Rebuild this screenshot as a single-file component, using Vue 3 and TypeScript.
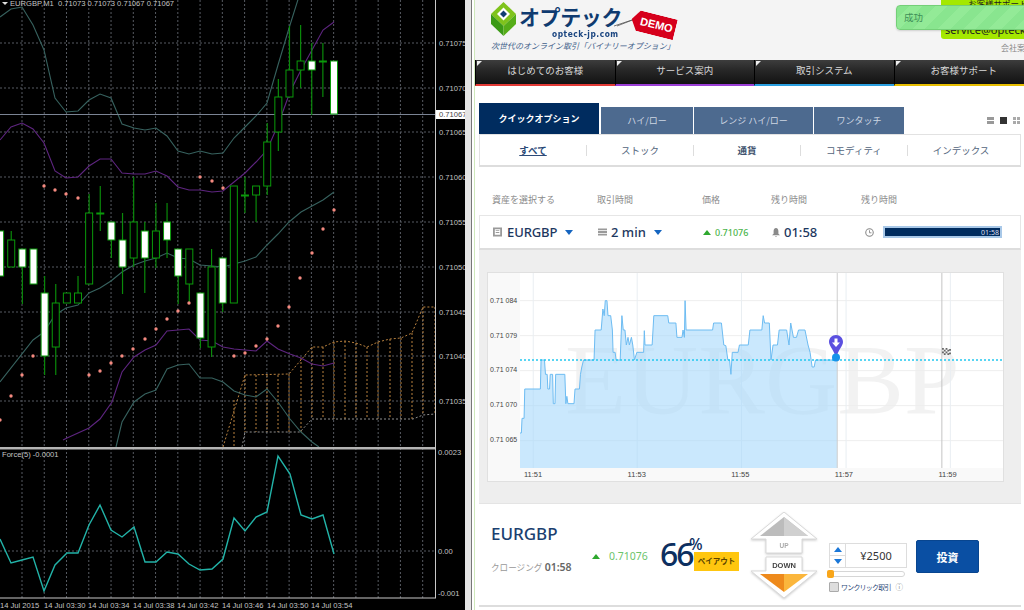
<script setup lang="ts">
type Candle = { top: number; bottom: number; hi: number; lo: number; filled: boolean }
type Pt = [number, number]

const toPoints = (pts: Pt[]) => pts.map(p => p.join(',')).join(' ')

// candles from newest (x=334) to oldest, step is one bar on the M1 chart
const rawCandles: [number, number, number, number, number][] = [
  [61, 114, 61, 114, 1], [61, 62, 43, 97, 0], [61, 70, 43, 115, 1], [61, 70, 25, 88, 0],
  [70, 97, 26, 97, 0], [97, 132, 79, 151, 0], [142, 186, 123, 195, 0], [186, 195, 186, 222, 0],
  [195, 196, 177, 213, 0], [186, 303, 186, 303, 0], [258, 303, 258, 312, 1], [267, 347, 249, 357, 0],
  [293, 338, 293, 348, 1], [249, 284, 249, 304, 0], [249, 276, 249, 304, 1], [222, 240, 203, 258, 1],
  [231, 258, 203, 268, 0], [231, 258, 222, 293, 1], [222, 258, 177, 267, 0], [240, 267, 213, 294, 1],
  [222, 240, 222, 258, 1], [213, 214, 186, 231, 0], [213, 284, 194, 284, 0], [293, 303, 276, 303, 0],
  [293, 303, 293, 303, 0], [303, 347, 284, 375, 0], [293, 356, 276, 375, 1], [249, 284, 249, 284, 1],
  [249, 267, 249, 304, 1], [240, 267, 231, 267, 0], [231, 276, 231, 276, 1]
]
const candles: (Candle & { x: number })[] = rawCandles.map((c, i) => ({
  x: 334 - i * 11.13,
  top: c[0],
  bottom: c[1],
  hi: c[2],
  lo: c[3],
  filled: c[4] === 1
}))

const upperBand = toPoints([[0, 17], [11, 9], [22, 7], [33, 25], [44, 50], [55, 98], [66, 112], [78, 111], [89, 100], [100, 94], [111, 98], [122, 124], [134, 128], [145, 130], [156, 128], [167, 136], [178, 151], [189, 154], [200, 151], [212, 154], [223, 153], [234, 138], [245, 127], [256, 116], [267, 103], [278, 65], [290, 25], [301, -10]])
const upperMid = toPoints([[0, 140], [11, 127], [22, 123], [33, 129], [44, 143], [55, 171], [66, 178], [78, 177], [89, 166], [100, 159], [111, 159], [122, 173], [134, 174], [145, 174], [156, 171], [167, 176], [178, 187], [189, 190], [200, 190], [212, 192], [223, 191], [234, 182], [245, 173], [256, 162], [267, 150], [278, 125], [290, 92], [301, 70], [312, 50], [323, 30], [334, 22]])
const lowerBand = toPoints([[0, 382], [33, 340], [44, 332], [55, 315], [66, 308], [78, 305], [89, 293], [100, 288], [111, 281], [122, 272], [134, 265], [145, 261], [156, 258], [167, 253], [178, 258], [189, 259], [200, 265], [212, 266], [223, 267], [234, 264], [245, 261], [256, 257], [267, 245], [278, 234], [289, 222], [301, 212], [312, 206], [323, 200], [334, 192]])
const lowerMid = toPoints([[63, 440], [67, 438], [89, 428], [100, 419], [112, 402], [122, 372], [134, 357], [145, 350], [156, 345], [167, 331], [178, 330], [189, 329], [200, 340], [212, 341], [223, 347], [234, 349], [245, 350], [256, 351], [267, 341], [278, 349], [290, 354], [301, 358], [312, 364], [323, 366], [334, 363]])
const lowestBand = toPoints([[116, 447], [122, 422], [134, 402], [145, 394], [156, 390], [167, 369], [178, 365], [189, 364], [200, 378], [212, 378], [223, 382], [234, 391], [245, 395], [256, 397], [267, 389], [278, 402], [290, 419], [301, 432], [312, 442], [319, 447]])
const cloudTop = toPoints([[223, 447], [245, 375], [289, 374], [312, 347], [323, 347], [334, 342], [345, 341], [356, 343], [367, 347], [378, 342], [390, 339], [401, 338], [412, 333], [423, 307], [435, 307]])
const cloudBottom = toPoints([[242, 447], [245, 432], [300, 432], [312, 419], [413, 419], [423, 415], [435, 414]])
const cloudBars: [number, number, number][] = [
  [234, 400, 447], [245, 375, 432], [256, 375, 432], [267, 375, 432], [278, 375, 432], [289, 374, 432],
  [301, 358, 432], [312, 347, 419], [323, 347, 419], [334, 342, 419], [345, 341, 419], [356, 343, 419],
  [367, 347, 419], [378, 342, 419], [390, 339, 419], [401, 338, 419], [412, 333, 419], [423, 307, 415], [435, 307, 414]
]
const sarDots: Pt[] = [[44, 186], [55, 190], [66, 194], [78, 198], [200, 177], [212, 181], [223, 188], [334, 210], [323, 229], [312, 253], [300, 278], [289, 307], [278, 326], [267, 339], [256, 346], [245, 353], [234, 356], [189, 303], [178, 311], [167, 319], [156, 329], [145, 339], [133, 349], [122, 356], [111, 363], [100, 371], [89, 375], [33, 356], [22, 375], [11, 396], [0, 420]]
const forceLine = toPoints([[0, 539], [11, 563], [22, 560], [33, 557], [44, 591], [55, 565], [67, 553], [78, 553], [89, 525], [100, 505], [111, 530], [122, 537], [134, 527], [145, 562], [156, 562], [167, 552], [178, 554], [189, 564], [200, 570], [212, 569], [223, 559], [234, 518], [245, 531], [256, 517], [267, 512], [278, 456], [290, 474], [301, 515], [312, 519], [323, 515], [334, 554]])

const gridX = Array.from({ length: 19 }, (_, i) => 22 + i * 22.26)
const priceLevels: [number, string][] = [
  [43, '0.71075'], [88, '0.71070'], [132, '0.71065'], [177, '0.71060'], [222, '0.71055'],
  [267, '0.71050'], [312, '0.71045'], [356, '0.71040'], [401, '0.71035']
]
const timeLabels: [number, string][] = [
  [0, '14 Jul 2015'], [44, '14 Jul 03:30'], [88, '14 Jul 03:34'], [133, '14 Jul 03:38'],
  [177, '14 Jul 03:42'], [222, '14 Jul 03:46'], [267, '14 Jul 03:50'], [311, '14 Jul 03:54']
]

const navItems = [
  { label: 'はじめてのお客様', color: '#e23a36' },
  { label: 'サービス案内', color: '#9b3fd6' },
  { label: '取引システム', color: '#2a9fe0' },
  { label: 'お客様サポート', color: '#e6bd00' }
]
const tabs = ['クイックオプション', 'ハイ/ロー', 'レンジ ハイ/ロー', 'ワンタッチ']
const assets = ['すべて', 'ストック', '通貨', 'コモディティ', 'インデックス']

// blue line of the option chart
const tick: Pt[] = [[118, 502], [122, 502], [124, 458], [130, 458], [132, 370], [178, 370], [180, 283], [190, 283], [193, 326], [198, 326], [200, 370], [205, 370], [207, 326], [214, 326], [216, 414], [221, 414], [223, 326], [250, 326], [253, 414], [256, 392], [259, 414], [277, 414], [280, 370], [293, 370], [296, 326], [300, 304], [305, 283], [336, 283], [339, 193], [357, 193], [362, 130], [366, 150], [369, 105], [374, 105], [377, 150], [385, 150], [390, 193], [392, 260], [398, 260], [401, 283], [413, 283], [418, 150], [422, 193], [427, 193], [431, 238], [436, 215], [440, 238], [446, 215], [450, 238], [455, 283], [462, 260], [482, 260], [484, 195], [486, 238], [507, 238], [512, 150], [553, 150], [556, 172], [577, 172], [580, 215], [595, 215], [598, 193], [602, 215], [604, 105], [607, 193], [685, 193], [688, 172], [711, 172], [718, 238], [724, 240], [730, 283], [735, 283], [739, 326], [743, 260], [760, 260], [764, 238], [790, 238], [795, 193], [830, 193], [834, 150], [838, 172], [852, 172], [857, 283], [863, 238], [876, 238], [881, 193], [903, 193], [910, 238], [915, 172], [923, 215], [932, 215], [938, 193], [957, 193], [966, 238], [972, 260], [978, 304], [984, 304], [988, 283], [1052, 283]]
const tickLine = toPoints(tick)
const tickArea = toPoints([...tick, [1052, 607], [118, 607]])
const chartRows = [105, 210, 315, 420, 525]
const chartCols = [157, 463, 770, 1078, 1385]
const yLabels = ['0.71 084', '0.71 079', '0.71 074', '0.71 070', '0.71 065']
const xLabels = ['11:51', '11:53', '11:55', '11:57', '11:59']
</script>

<template>
  <div class="screen">
    <div class="terminal">
      <svg class="mt4" viewBox="0 0 465 610" width="465" height="610">
        <g stroke="#575b62" stroke-width="1" stroke-dasharray="2 2">
          <line v-for="x in gridX" :key="x" :x1="x" y1="0" :x2="x" y2="598" />
          <line v-for="p in priceLevels" :key="p[1]" x1="0" :y1="p[0]" x2="435" :y2="p[0]" />
          <line x1="0" y1="551" x2="435" y2="551" />
        </g>
        <g fill="none" stroke="#b8813f" stroke-dasharray="2 2">
          <polyline :points="cloudTop" />
          <line v-for="b in cloudBars" :key="b[0]" :x1="b[0]" :y1="b[1]" :x2="b[0]" :y2="b[2]" />
        </g>
        <polyline :points="cloudBottom" fill="none" stroke="#8f8f8f" stroke-dasharray="2 2" />
        <g fill="none" stroke="#37625f" stroke-width="1.1">
          <polyline :points="upperBand" />
          <polyline :points="lowerBand" />
          <polyline :points="lowestBand" />
        </g>
        <g fill="none" stroke="#5e2580" stroke-width="1.1">
          <polyline :points="upperMid" />
          <polyline :points="lowerMid" />
        </g>
        <line x1="0" y1="114.5" x2="435" y2="114.5" stroke="#7b8494" />
        <g v-for="c in candles" :key="c.x">
          <line :x1="c.x" :y1="c.hi" :x2="c.x" :y2="c.lo" stroke="#0a8a0a" stroke-width="1.2" />
          <rect :x="c.x - 3.5" :y="c.top" width="7" :height="c.bottom - c.top"
            :fill="c.filled ? '#fff' : '#000'" stroke="#0a9a0a" stroke-width="1" />
        </g>
        <circle v-for="d in sarDots" :key="d.join('-')" :cx="d[0]" :cy="d[1]" r="1.7" fill="#f58a80" />

        <rect x="0" y="447" width="436" height="2.5" fill="#b4b4b4" />
        <line x1="435.5" y1="0" x2="435.5" y2="598" stroke="#c8c8c8" />
        <line x1="0" y1="598" x2="436" y2="598" stroke="#c8c8c8" />
        <polyline :points="forceLine" fill="none" stroke="#22b3a8" stroke-width="1.4" />

        <rect x="436" y="110" width="29" height="9" fill="#fff" />
        <g class="mt4-text">
          <text x="10" y="6">EURGBP,M1&#160; 0.71073 0.71073 0.71067 0.71067</text>
          <text x="2" y="457">Force(5) -0.0001</text>
          <text v-for="p in priceLevels" :key="p[1]" x="439" :y="p[0] + 3">{{ p[1] }}</text>
          <text x="438" y="455">0.0023</text>
          <text x="438" y="554">0.00</text>
          <text x="438" y="596">-0.001</text>
          <text v-for="t in timeLabels" :key="t[1]" :x="t[0]" y="608">{{ t[1] }}</text>
        </g>
        <text x="439" y="117" class="mt4-last">0.71067</text>
        <polygon points="2,2 8,2 5,5" fill="#ddd" />
      </svg>
    </div>
    <div class="divider"></div>

    <div class="site">
      <header class="head">
        <div class="brand">
          <div class="brand-top">
            <svg class="brand-mark" viewBox="0 0 25 34" width="25" height="34">
              <polygon points="12.5,0 25,12 12.5,24 0,12" fill="#7fc31c" />
              <polygon points="0,12 12.5,24 12.5,34 0,22" fill="#3b9a16" />
              <polygon points="25,12 12.5,24 12.5,34 25,22" fill="#56ad18" />
              <polygon points="12.5,5.5 19,12 12.5,18.5 6,12" fill="#fff" />
              <polygon points="12.5,8.5 16,12 12.5,15.5 9,12" fill="#103d72" />
            </svg>
            <div class="brand-name">
              <span class="brand-jp">オプテック</span>
              <span class="brand-url">opteck-jp.com</span>
            </div>
          </div>
          <div class="brand-tag">次世代のオンライン取引「バイナリーオプション」</div>
          <svg class="thread" viewBox="0 0 22 10" width="22" height="10">
            <polyline points="0,9 21,2 3,9" fill="none" stroke="#555" stroke-width="0.8" />
          </svg>
          <div class="demo">DEMO</div>
        </div>
        <div class="contact">
          <div class="contact-box">
            <span>お客様サポート</span>
            <span class="contact-mail">service@opteck-jp.com</span>
          </div>
          <div class="contact-link">会社案内</div>
        </div>
        <div class="toast">成功</div>
      </header>

      <nav class="nav">
        <a v-for="n in navItems" :key="n.label" class="nav-item" :style="{ borderBottomColor: n.color }">{{ n.label }}</a>
      </nav>

      <main class="body">
        <div class="tab-row">
          <div v-for="(t, i) in tabs" :key="t" class="tab" :class="['tab-' + i, { active: i === 0 }]">{{ t }}</div>
          <div class="views">
            <i class="v-rows"></i>
            <i class="v-one"></i>
            <i class="v-grid"></i>
          </div>
        </div>
        <div class="assets">
          <span v-for="(a, i) in assets" :key="a" class="asset" :class="{ current: i === 0, strong: i === 2 }">{{ a }}</span>
        </div>

        <div class="col-labels">
          <span class="c1">資産を選択する</span>
          <span class="c2">取引時間</span>
          <span class="c3">価格</span>
          <span class="c4">残り時間</span>
          <span class="c5">残り時間</span>
        </div>

        <div class="select-row">
          <span class="c1 sel">
            <svg viewBox="0 0 10 10" width="9" height="10"><path d="M0 0h10v10H0z M2 2v6h6V2z M3 3h4v1H3z M3 5h4v1H3z" fill="#9a9a9a" fill-rule="evenodd" /></svg>
            <b class="sel-pair">EURGBP</b><i class="caret"></i>
          </span>
          <span class="c2 sel">
            <svg viewBox="0 0 10 8" width="9" height="8"><path d="M0 0h10v2H0z M0 3h10v2H0z M0 6h10v2H0z" fill="#9a9a9a" /></svg>
            <b>2 min</b><i class="caret"></i>
          </span>
          <span class="c3 sel">
            <i class="up-green"></i><em class="live">0.71076</em>
          </span>
          <span class="c4 sel">
            <svg viewBox="0 0 10 11" width="8" height="9"><path d="M5 0c-2 0-3 2-3 4v3L0 9h10L8 7V4c0-2-1-4-3-4z M3.8 10h2.4L5 11z" fill="#8a8a8a" /></svg>
            <b>01:58</b>
          </span>
          <span class="c5 sel">
            <svg class="clock" viewBox="0 0 12 12" width="9" height="9"><circle cx="6" cy="6" r="5" fill="none" stroke="#888" stroke-width="1.4" /><path d="M6 3v3.4h2.6" fill="none" stroke="#888" stroke-width="1.2" /></svg>
            <span class="timer"><span>01:58</span></span>
          </span>
        </div>

        <section class="stage">
          <div class="chart">
            <div class="chart-main">
              <div class="y-axis">
                <span v-for="l in yLabels" :key="l">{{ l }}</span>
              </div>
              <div class="plot">
                <span class="watermark">EURGBP</span>
                <svg class="plot-svg" viewBox="118 22 1422 585" preserveAspectRatio="none">
                  <line v-for="r in chartRows" :key="r" x1="118" :y1="r" x2="1540" :y2="r" stroke="#eeeeee" vector-effect="non-scaling-stroke" />
                  <line v-for="c in chartCols" :key="c" :x1="c" y1="22" :x2="c" y2="607" stroke="#e9eef2" vector-effect="non-scaling-stroke" />
                  <polygon :points="tickArea" fill="#a6d8fb" fill-opacity="0.6" />
                  <polyline :points="tickLine" fill="none" stroke="#6dbcf2" stroke-width="1" vector-effect="non-scaling-stroke" />
                  <line x1="1052" y1="22" x2="1052" y2="607" stroke="#cfcfcf" vector-effect="non-scaling-stroke" />
                  <line x1="1360" y1="22" x2="1360" y2="607" stroke="#c4c4c4" vector-effect="non-scaling-stroke" />
                  <line x1="118" y1="283" x2="1540" y2="283" stroke="#22c8f0" stroke-width="1.6" stroke-dasharray="2 2" vector-effect="non-scaling-stroke" />
                </svg>
                <svg class="pin" viewBox="0 0 14 27" width="14" height="27">
                  <path d="M7 0C3 0 0 3 0 7c0 4 5 8 7 16 2-8 7-12 7-16 0-4-3-7-7-7z" fill="#5b50e0" />
                  <path d="M5.5 3.5h3v4H11L7 12 3 7.5h2.5z" fill="#fff" />
                  <circle cx="7" cy="22.5" r="4" fill="#1793ea" />
                </svg>
                <svg class="flag" viewBox="0 0 10 9" width="9" height="8">
                  <path d="M0 0h2v2H0z M4 0h2v2H4z M8 1h2v2H8z M2 2h2v2H2z M6 2h2v2H6z M0 4h2v2H0z M4 4h2v2H4z M8 5h2v2H8z M2 6h2v2H2z M6 6h2v2H6z" fill="#666" />
                </svg>
              </div>
            </div>
            <div class="x-axis">
              <span v-for="l in xLabels" :key="l">{{ l }}</span>
            </div>
          </div>
        </section>

        <section class="ticket">
          <div class="quote">
            <div class="quote-name">EURGBP</div>
            <div class="quote-close">クロージング <b>01:58</b></div>
          </div>
          <div class="quote-price"><i class="up-green"></i><span>0.71076</span></div>
          <div class="payout">
            <div class="payout-num">66<sup>%</sup></div>
            <div class="payout-tag">ペイアウト</div>
          </div>
          <svg class="updown" viewBox="0 0 68 90" width="68" height="90">
            <polygon points="33,0 66,27 51,27 51,41 15,41 15,27 0,27" fill="#fff" stroke="#d9d9d9" />
            <polygon points="33,5 57,24 9,24" fill="#bcbcbc" />
            <polygon points="33,5 57,24 33,24" fill="#d0d0d0" />
            <polygon points="15,45 51,45 51,59 66,59 33,86 0,59 15,59" fill="#fff" stroke="#d9d9d9" />
            <polygon points="9,62 33,62 33,80" fill="#ee8a1c" />
            <polygon points="57,62 33,62 33,80" fill="#fbb63c" />
            <text x="33" y="36" class="ud-up" text-anchor="middle">UP</text>
            <text x="33" y="56" class="ud-down" text-anchor="middle">DOWN</text>
          </svg>
          <div class="amount">
            <div class="stepper">
              <div class="step-btns">
                <span><i class="tri-up"></i></span>
                <span><i class="tri-down"></i></span>
              </div>
              <div class="step-val">¥2500</div>
            </div>
            <div class="slider"><i></i></div>
            <label class="oneclick"><i class="check"></i><span>ワンクリック取引</span><em>ⓘ</em></label>
          </div>
          <button class="invest">投資</button>
        </section>
      </main>
    </div>
  </div>
</template>

<style>
html, body { margin: 0; padding: 0; overflow: hidden; background: #000; }
</style>

<style scoped>
.screen {
  display: flex;
  width: 1024px;
  height: 610px;
  overflow: hidden;
  font-family: "Noto Sans", "Noto Sans CJK JP", sans-serif;
}
.terminal { width: 465px; flex: none; background: #000; }
.mt4 { display: block; }
.mt4-text text { font-family: "Liberation Sans", sans-serif; font-size: 7.6px; fill: #c4c4c4; }
.mt4-last { font-family: "Liberation Sans", sans-serif; font-size: 7.6px; fill: #444; }
.divider {
  width: 10px;
  flex: none;
  background: linear-gradient(90deg, #e4e4e4 0, #e4e4e4 6px, #777 6px, #777 7px, #fff 7px, #fff 9px, #cfe8bc 9px);
}

.site { flex: 1; min-width: 0; display: flex; flex-direction: column; background: #fff; }

.head { position: relative; height: 60px; flex: none; background: #f4f4f4; display: flex; justify-content: space-between; }
.brand { position: relative; padding: 2px 0 0 16px; }
.brand-top { display: flex; gap: 3px; }
.brand-name { display: flex; flex-direction: column; }
.brand-jp { font-size: 21px; line-height: 28px; font-weight: 700; color: #0f3b70; font-family: "Noto Sans CJK JP", sans-serif; letter-spacing: -.4px; }
.brand-url { font-size: 8.5px; line-height: 9px; margin: 0 0 0 33px; font-weight: 700; color: #1a4580; letter-spacing: .6px; font-family: "DejaVu Sans", sans-serif; transform: scaleX(.88); transform-origin: left; }
.brand-tag { margin-top: 1px; font-size: 8px; line-height: 12px; color: #41618a; font-style: italic; white-space: nowrap; font-family: "Noto Sans CJK JP", sans-serif; }
.thread { position: absolute; left: 139px; top: 17px; }
.demo {
  position: absolute;
  left: 156px;
  top: 14px;
  width: 45px;
  height: 21px;
  padding-left: 6px;
  box-sizing: border-box;
  background: #d6001c;
  color: #fff;
  font: 700 11px/21px "Liberation Sans", sans-serif;
  text-align: center;
  transform: rotate(14deg);
  clip-path: polygon(7px 0, 100% 0, 100% 100%, 7px 100%, 0 50%);
}
.contact { width: 83px; overflow: hidden; white-space: nowrap; }
.contact-box {
  height: 39px;
  background: #a4e800;
  border-radius: 0 0 0 3px;
  display: flex;
  flex-direction: column;
  justify-content: space-between;
  padding-left: 4px;
  font-size: 8.5px;
  line-height: 9px;
  color: #222;
}
.contact-box span:first-child { margin-top: -1px; padding-left: 23px; }
.contact-mail { font-size: 11px; line-height: 15px; margin-bottom: 2px; }
.contact-link { margin: 3px 0 0 60px; font-size: 8px; line-height: 11px; color: #888; }
.toast {
  position: absolute;
  left: 421px;
  top: 5px;
  width: 140px;
  height: 25px;
  box-sizing: border-box;
  padding-left: 7px;
  border: 1px solid #74cf78;
  border-radius: 4px;
  color: #3f8f58;
  font-size: 9.5px;
  line-height: 23px;
  background: repeating-linear-gradient(135deg, #89e58f 0 9px, #93ea97 9px 18px);
  box-shadow: 0 1px 2px rgba(0, 0, 0, .15);
}

.nav { display: flex; height: 26px; flex: none; }
.nav-item {
  position: relative;
  flex: 0 0 139.5px;
  box-sizing: border-box;
  border-bottom: 2px solid;
  border-left: 1px solid #000;
  background: linear-gradient(#3d3d3d, #262626 45%, #121212);
  color: #d8d8d8;
  font-size: 9.5px;
  line-height: 22px;
  text-align: center;
}
.nav-item::before {
  content: "";
  position: absolute;
  left: 1px;
  top: 1px;
  border-top: 5px solid #eee;
  border-right: 5px solid transparent;
}

.body { flex: 1; position: relative; display: flex; flex-direction: column; padding: 17px 3px 0 4px; }
.tab-row { display: flex; align-items: flex-end; height: 31px; flex: none; font-family: "Noto Sans CJK JP", sans-serif; }
.tab {
  height: 27px;
  margin-right: 1px;
  background: #4d6a8f;
  color: #cdd6e2;
  font-size: 9px;
  line-height: 27px;
  text-align: center;
}
.tab.active { height: 31px; background: #002c5f; color: #fff; font-weight: 700; line-height: 31px; margin-right: 2px; }
.tab-0 { width: 120px; }
.tab-1 { width: 92px; }
.tab-2 { width: 119px; }
.tab-3 { width: 90px; margin-right: 0; }
.views { margin-left: auto; display: flex; gap: 6px; padding: 0 1px 10px 0; }
.views i { display: block; width: 7px; height: 7px; background: #999; }
.views .v-one { background: #333; }
.views .v-rows { background: linear-gradient(#999 45%, #fff 45%, #fff 55%, #999 55%); }
.views .v-grid { background: conic-gradient(#aaa 0 0) 0 0 / 3px 3px no-repeat, conic-gradient(#aaa 0 0) 4px 0 / 3px 3px no-repeat, conic-gradient(#aaa 0 0) 0 4px / 3px 3px no-repeat, conic-gradient(#aaa 0 0) 4px 4px / 3px 3px no-repeat; }

.assets {
  display: flex;
  height: 33px;
  flex: none;
  align-items: center;
  background: #fff;
  border: 1px solid #e2e2e2;
  border-bottom: 2px solid #ddd;
  box-sizing: border-box;
  font-family: "Noto Sans CJK JP", sans-serif;
}
.asset {
  flex: 0 0 106px;
  height: 11px;
  line-height: 11px;
  text-align: center;
  border-right: 1px solid #ddd;
  font-size: 9.5px;
  color: #53657c;
}
.asset:last-child { border-right: 0; }
.asset.current { color: #2c4a78; text-decoration: underline; font-weight: 700; }
.asset.strong { font-weight: 700; color: #3f536e; }

.col-labels { position: relative; display: flex; height: 48px; padding-top: 16px; box-sizing: border-box; flex: none; align-items: center; font-size: 9px; color: #8a8a8a; font-family: "Noto Sans CJK JP", sans-serif; }
.col-labels span, .select-row > span { display: flex; align-items: center; }
.c1 { flex: 0 0 105px; padding-left: 13px; box-sizing: border-box; }
.c2 { flex: 0 0 105px; }
.c3 { flex: 0 0 69px; }
.c4 { flex: 0 0 90px; }
.c5 { flex: 1; }

.select-row {
  display: flex;
  height: 35px;
  flex: none;
  align-items: center;
  background: #fff;
  border: 1px solid #e6e6e6;
  border-bottom: 2px solid #ddd;
  box-sizing: border-box;
}
.col-labels .c1, .select-row .c1 { padding-left: 13px; flex-basis: 118px; }
.col-labels .c2, .select-row .c2 { flex-basis: 105px; }
.sel { gap: 4px; }
.sel b { font-size: 13px; font-weight: 500; color: #1c3760; }
.sel-pair { letter-spacing: -.1px; margin-left: 1px; }
.caret { width: 0; height: 0; margin-left: 4px; border-left: 4.5px solid transparent; border-right: 4.5px solid transparent; border-top: 5px solid #1565c0; }
.up-green { display: inline-block; width: 0; height: 0; border-left: 4.5px solid transparent; border-right: 4.5px solid transparent; border-bottom: 5px solid #2ea82e; }
.live { font-size: 9px; font-style: normal; color: #4cb44c; font-weight: 500; }
.clock { margin-left: 3px; }
.timer {
  display: flex;
  align-items: center;
  justify-content: flex-end;
  width: 119px;
  height: 12px;
  margin-left: 5px;
  box-sizing: border-box;
  border: 2px solid #a8c8e8;
  background: #002c5f;
  color: #dde;
  font-size: 7px;
  padding-right: 1px;
}

.stage { height: 253px; flex: none; background: #eeeeee; padding: 22px 0 0 8px; box-sizing: border-box; }
.chart {
  width: 517px;
  height: 210px;
  box-sizing: border-box;
  background: #f9f9f9;
  border: 1px solid #e0e0e0;
  display: flex;
  flex-direction: column;
}
.chart-main { display: flex; height: 195px; flex: none; }
.y-axis { width: 32px; flex: none; display: flex; flex-direction: column; gap: 24.7px; padding: 23px 0 0 2px; box-sizing: border-box; font: 7px/10px "Liberation Sans", sans-serif; color: #444; white-space: nowrap; }
.plot { position: relative; flex: 1; background: #fff; overflow: hidden; }
.plot-svg { position: absolute; inset: 0; width: 100%; height: 100%; display: block; }
.watermark {
  position: absolute;
  left: 45px;
  top: 57px;
  font: 100px/100px "Liberation Serif", serif;
  color: rgba(0, 0, 0, .05);
  white-space: nowrap;
}
.pin { position: absolute; left: 309px; top: 62px; }
.flag { position: absolute; left: 422px; top: 75px; }
.x-axis { flex: 1; display: flex; padding-left: 36px; font: 7.5px/13px "Liberation Sans", sans-serif; color: #444; }
.x-axis span { flex: 0 0 103.6px; }

.ticket {
  position: relative;
  height: 104px;
  flex: none;
  background: #fff;
  border-top: 1px solid #e4e4e4;
  border-bottom: 2px solid #ddd;
  box-sizing: border-box;
  display: flex;
  align-items: flex-start;
}
.quote { width: 101px; flex: none; padding: 20px 0 0 12px; box-sizing: content-box; }
.quote-name { font-size: 17px; line-height: 20px; font-weight: 500; color: #1b3f70; }
.quote-close { margin-top: 16px; font-size: 8.6px; line-height: 14px; color: #999; white-space: nowrap; }
.quote-close b { color: #666; font-weight: 600; font-size: 10.5px; }
.quote-price { width: 68px; flex: none; margin-top: 45px; display: flex; align-items: center; gap: 9px; font-size: 10.5px; color: #6cc46c; }
.payout { position: relative; width: 90px; flex: none; padding-top: 29px; }
.payout-num { font-size: 32px; line-height: 42px; letter-spacing: -2px; font-weight: 500; color: #0d2f60; }
.payout-num sup { position: absolute; left: 29px; top: 32px; font-size: 16px; line-height: 16px; letter-spacing: 0; }
.payout-tag {
  position: absolute;
  left: 34px;
  top: 48px;
  width: 45px;
  height: 19px;
  background: #ffc60f;
  color: #5a4300;
  font-size: 7.5px;
  font-weight: 700;
  line-height: 19px;
  text-align: center;
}
.updown { flex: none; margin: 8px 8px 0 1px; filter: drop-shadow(0 1px 1px rgba(0, 0, 0, .2)); }
.ud-up { font: 700 6.5px "Liberation Sans", sans-serif; fill: #aaa; }
.ud-down { font: 700 7.5px "Liberation Sans", sans-serif; fill: #444; }
.amount { width: 89px; flex: none; padding-top: 39px; }
.stepper { display: flex; width: 78px; height: 25px; margin-left: 2px; border: 1px solid #ddd; box-sizing: border-box; }
.step-btns { width: 15px; flex: none; display: flex; flex-direction: column; border-right: 1px solid #ddd; }
.step-btns span { flex: 1; display: flex; align-items: center; justify-content: center; }
.step-btns span:first-child { border-bottom: 1px solid #ddd; }
.tri-up, .tri-down { width: 0; height: 0; border-left: 4.5px solid transparent; border-right: 4.5px solid transparent; }
.tri-up { border-bottom: 5px solid #1a77d8; }
.tri-down { border-top: 5px solid #1a77d8; }
.step-val { flex: 1; text-align: center; font-size: 11px; line-height: 23px; color: #333; }
.slider { position: relative; height: 6px; width: 78px; margin-top: 3px; border: 1px solid #d6d6d6; border-radius: 4px; box-sizing: border-box; }
.slider i { position: absolute; left: -1px; top: -2px; width: 7px; height: 8px; background: #f9a61a; border-radius: 2px; }
.oneclick { display: flex; align-items: center; gap: 2px; margin: 4px 0 0 2px; white-space: nowrap; font-size: 7px; letter-spacing: -.8px; color: #2c4a78; }
.oneclick em { font-style: normal; color: #888; font-size: 7.5px; letter-spacing: 0; margin-left: 3px; }
.check { width: 8px; height: 8px; background: #ddd; border: 1px solid #aaa; border-radius: 1px; flex: none; }
.invest {
  flex: none;
  width: 63px;
  height: 33px;
  margin: 36px 0 0 0;
  padding: 0;
  background: #0a4fa3;
  border: 1px solid #08458f;
  border-radius: 2px;
  color: #fff;
  font: 700 11px "Noto Sans CJK JP", sans-serif;
}
</style>
